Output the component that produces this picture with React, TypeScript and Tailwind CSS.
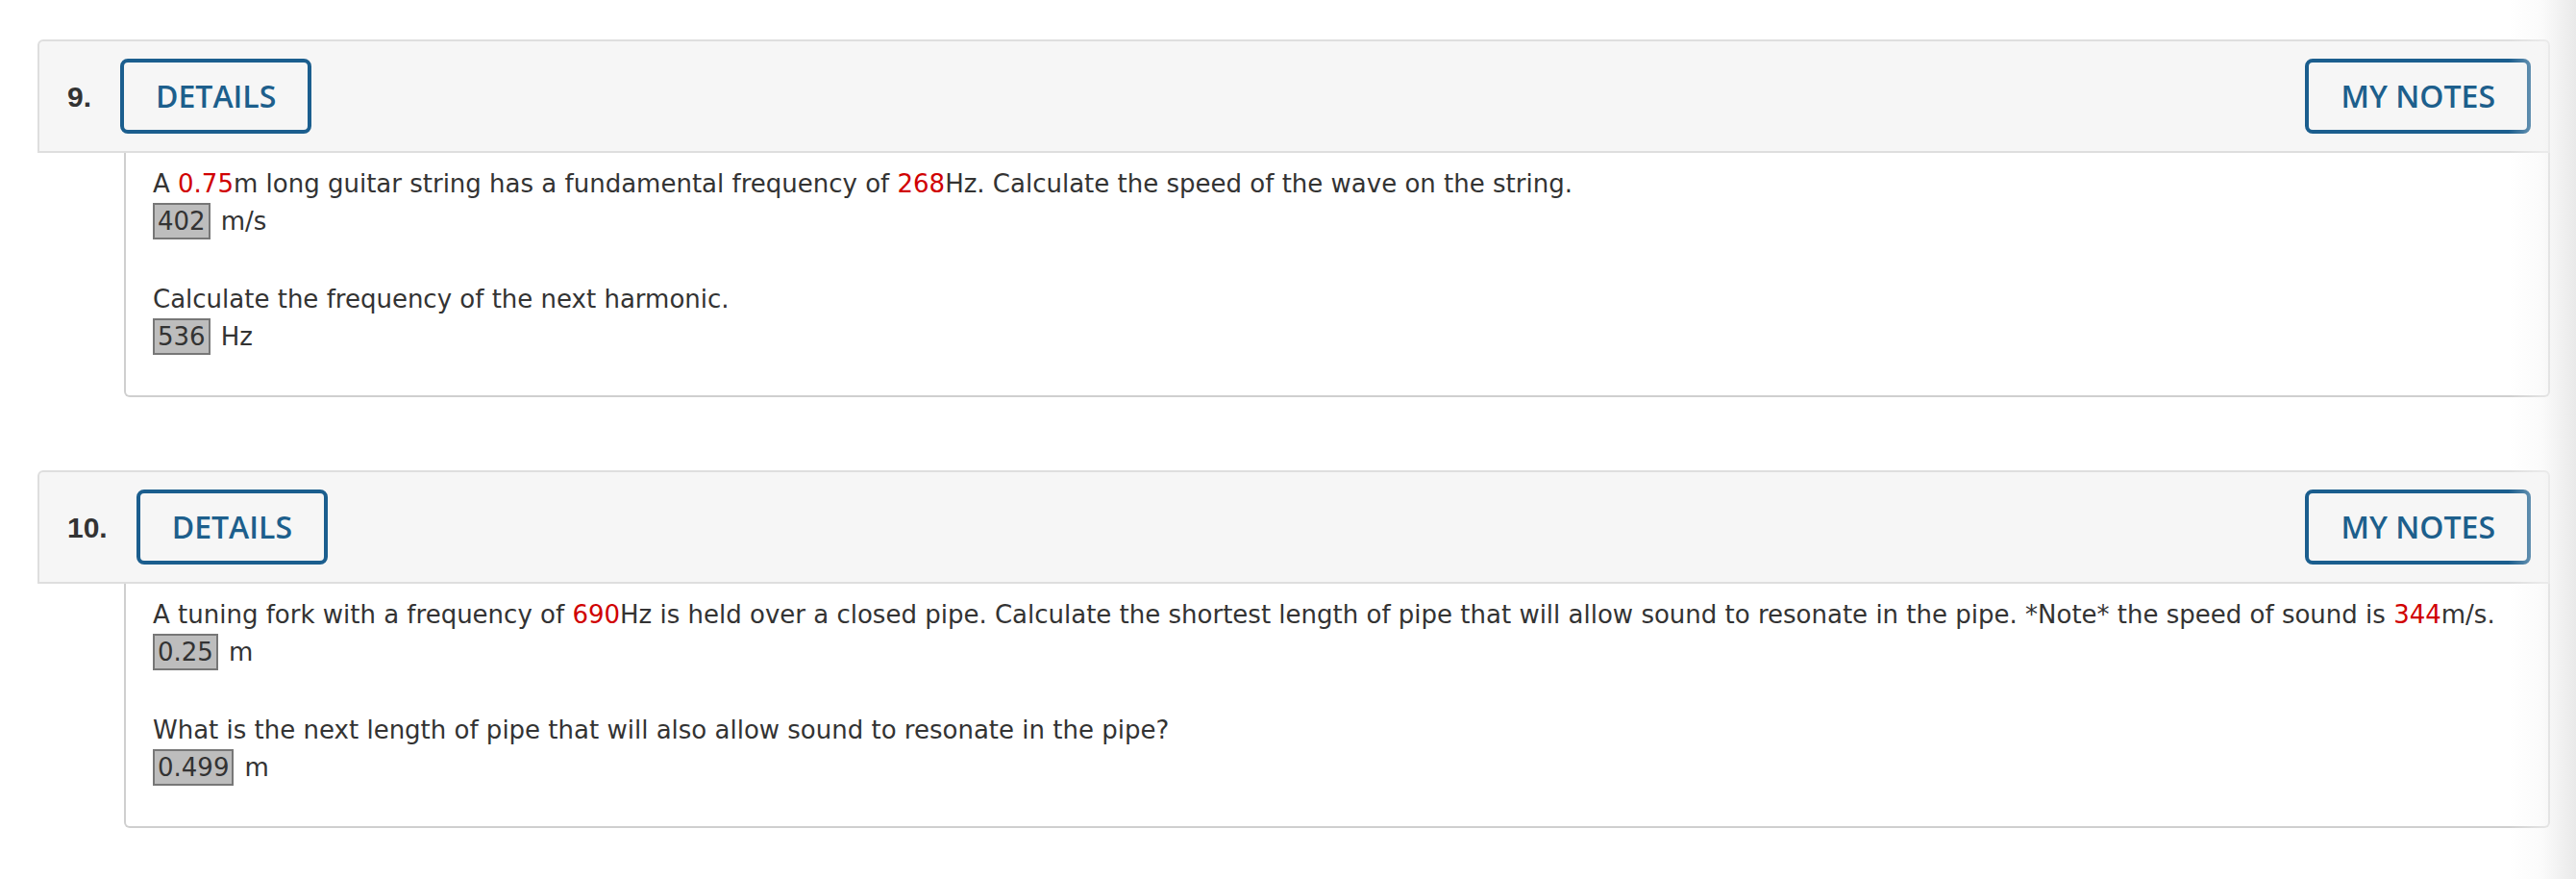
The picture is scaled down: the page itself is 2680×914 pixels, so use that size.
import type { ReactNode } from 'react';

const red = (t: string) => <span className="text-[#d00000]">{t}</span>;

function Answer({ value, unit }: { value: string; unit: string }) {
  return (
    <div className="mt-[5px] flex items-center">
      <span className="flex h-[38px] items-center border-2 border-[#777] bg-[#bdbdbd] px-[3px] text-[26px] leading-none text-[#333]">
        {value}
      </span>
      <span className="ml-[11px] text-[26px] leading-none">{unit}</span>
    </div>
  );
}

interface Part {
  text: ReactNode;
  value: string;
  unit: string;
}

function Question({ num, parts }: { num: string; parts: Part[] }) {
  return (
    <div>
      <div className="flex h-[118px] items-center justify-between rounded-t-[6px] border-2 border-[#dedede] bg-[#f6f6f6] pl-[29px] pr-[18px]">
        <div className="flex items-center">
          <span className="font-['Liberation_Sans',Arial,sans-serif] text-[30px] font-bold text-[#333]">{num}</span>
          <button className="ml-[30px] h-[78px] rounded-[8px] border-4 border-[#1b5e8e] px-[33px] font-['Open_Sans',sans-serif] text-[32px] font-semibold text-[#1d5f8c]">
            DETAILS
          </button>
        </div>
        <button className="h-[78px] rounded-[8px] border-4 border-[#1b5e8e] px-[33px] font-['Open_Sans',sans-serif] text-[32px] font-semibold text-[#1d5f8c]">
          MY NOTES
        </button>
      </div>
      <div className="ml-[90px] rounded-b-[6px] border-2 border-t-0 border-[#cfcfcf] bg-white pb-[42px] pl-[28px] pt-[17px] font-['DejaVu_Sans',Verdana,sans-serif] text-[#333]">
        {parts.map((p, i) => (
          <div key={i} className={i > 0 ? 'mt-[47px]' : ''}>
            <div className="text-[26px] leading-[30px]">{p.text}</div>
            <Answer value={p.value} unit={p.unit} />
          </div>
        ))}
      </div>
    </div>
  );
}

export default function App() {
  return (
    <div className="relative min-h-[914px] bg-white">
      <div className="pl-[39px] pr-[27px] pt-[41px]">
        <Question
          num="9."
          parts={[
            {
              text: (
                <>
                  A {red('0.75')}m long guitar string has a fundamental frequency of {red('268')}Hz. Calculate the speed of the
                  wave on the string.
                </>
              ),
              value: '402',
              unit: 'm/s',
            },
            { text: 'Calculate the frequency of the next harmonic.', value: '536', unit: 'Hz' },
          ]}
        />
        <div className="mt-[76px]">
          <Question
            num="10."
            parts={[
              {
                text: (
                  <>
                    A tuning fork with a frequency of {red('690')}Hz is held over a closed pipe. Calculate the shortest length
                    of pipe that will allow sound to resonate in the pipe. *Note* the speed of sound is {red('344')}m/s.
                  </>
                ),
                value: '0.25',
                unit: 'm',
              },
              {
                text: 'What is the next length of pipe that will also allow sound to resonate in the pipe?',
                value: '0.499',
                unit: 'm',
              },
            ]}
          />
        </div>
      </div>
      <div className="pointer-events-none absolute bottom-0 right-0 top-0 w-[70px] bg-gradient-to-r from-white/0 via-[#f6f6f6]/50 to-[#e9e9e9]" />
    </div>
  );
}
